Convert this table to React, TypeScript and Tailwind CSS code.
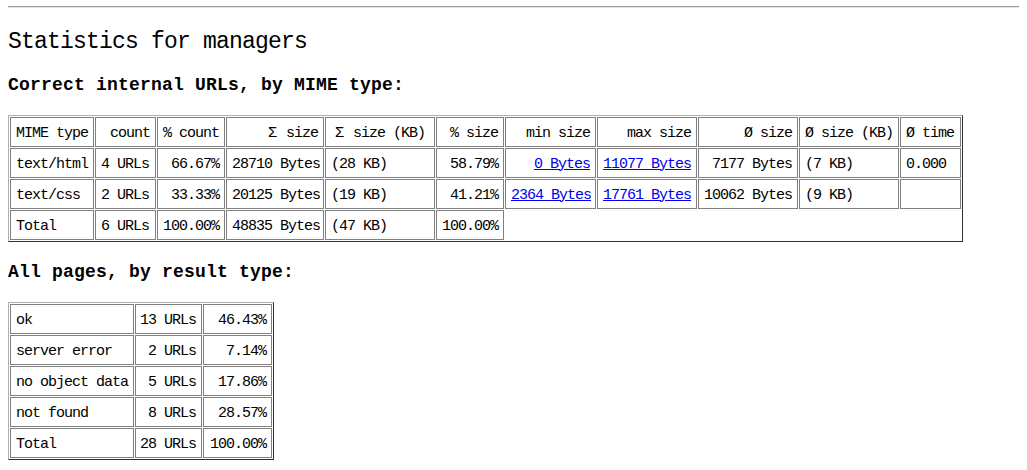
const mime = {
  cols: "grid-cols-[84px_61px_68px_98px_110px_68px_91px_100px_100px_100px_61px]",
};

type Cell = { t: React.ReactNode; r?: boolean; link?: boolean };

const sigma = (rest: string) => (
  <>
    <span className="inline-block w-4 text-center">Σ</span>
    <span className="ml-[6px]">{rest}</span>
  </>
);

const mimeRows: (Cell | null)[][] = [
  [
    { t: "MIME type" },
    { t: "count", r: true },
    { t: "% count" },
    { t: sigma("size"), r: true },
    { t: sigma("size (KB)") },
    { t: "% size", r: true },
    { t: "min size", r: true },
    { t: "max size", r: true },
    { t: "Ø size", r: true },
    { t: "Ø size (KB)" },
    { t: "Ø time" },
  ],
  [
    { t: "text/html" },
    { t: "4 URLs" },
    { t: "66.67%", r: true },
    { t: "28710 Bytes" },
    { t: "(28 KB)" },
    { t: "58.79%", r: true },
    { t: "0 Bytes", r: true, link: true },
    { t: "11077 Bytes", link: true },
    { t: "7177 Bytes", r: true },
    { t: "(7 KB)" },
    { t: "0.000" },
  ],
  [
    { t: "text/css" },
    { t: "2 URLs" },
    { t: "33.33%", r: true },
    { t: "20125 Bytes" },
    { t: "(19 KB)" },
    { t: "41.21%", r: true },
    { t: "2364 Bytes", link: true },
    { t: "17761 Bytes", link: true },
    { t: "10062 Bytes", r: true },
    { t: "(9 KB)" },
    { t: "" },
  ],
  [
    { t: "Total" },
    { t: "6 URLs" },
    { t: "100.00%", r: true },
    { t: "48835 Bytes" },
    { t: "(47 KB)" },
    { t: "100.00%", r: true },
  ],
];

const resultRows: [string, string, string][] = [
  ["ok", "13 URLs", "46.43%"],
  ["server error", "2 URLs", "7.14%"],
  ["no object data", "5 URLs", "17.86%"],
  ["not found", "8 URLs", "28.57%"],
  ["Total", "28 URLs", "100.00%"],
];

function Td({ c }: { c: Cell }) {
  return (
    <div
      className={`h-[30px] border border-[#808080] px-[5px] pt-[3px] flex items-center whitespace-nowrap ${
        c.r ? "justify-end" : "justify-start"
      }`}
    >
      {c.link ? <a href="#" className="text-[#0000ee] underline">{c.t}</a> : c.t}
    </div>
  );
}

function Grid({ cols, children }: { cols: string; children: React.ReactNode }) {
  return (
    <div
      className={`grid ${cols} gap-px p-px w-fit border border-t-[#b0b0b0] border-l-[#b0b0b0] border-b-[#303030] border-r-[#303030] text-[15px] leading-[18px] tracking-[-1px]`}
    >
      {children}
    </div>
  );
}

export default function App() {
  return (
    <div className="bg-white text-black px-2 pt-[6px] min-h-[470px] font-['Liberation_Mono','DejaVu_Sans_Mono',monospace]">
      <div className="h-[2px] border-t border-t-[#9a9a9a] border-b border-b-[#e6e6e6]" />

      <h2 className="mt-[20px] text-[23px] leading-[28px] tracking-[-0.8px]">Statistics for managers</h2>
      <h3 className="mt-[18px] text-[18px] leading-[22px] font-bold tracking-[0.2px]">
        Correct internal URLs, by MIME type:
      </h3>

      <div className="mt-[19px]">
        <Grid cols={mime.cols}>
          {mimeRows.map((row, i) =>
            row.map((c, j) => (c ? <Td key={`${i}-${j}`} c={c} /> : null))
          )}
        </Grid>
      </div>

      <h3 className="mt-[19px] text-[18px] leading-[22px] font-bold tracking-[0.2px]">
        All pages, by result type:
      </h3>

      <div className="mt-[19px]">
        <Grid cols="grid-cols-[124px_67px_69px]">
          {resultRows.map(([a, b, c]) => (
            <div key={a} className="contents">
              <Td c={{ t: a }} />
              <Td c={{ t: b, r: true }} />
              <Td c={{ t: c, r: true }} />
            </div>
          ))}
        </Grid>
      </div>
    </div>
  );
}
